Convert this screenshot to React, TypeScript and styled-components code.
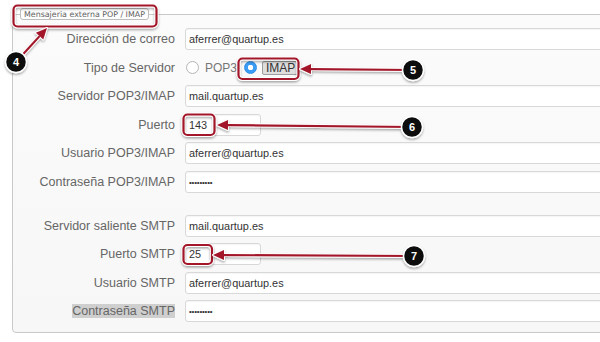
import React from "react";
import styled, { createGlobalStyle } from "styled-components";

const GlobalStyle = createGlobalStyle`
  html, body {
    margin: 0;
    padding: 0;
    background: #ffffff;
    overflow: hidden;
  }
  body {
    font-family: "Liberation Sans", Arial, sans-serif;
    width: 600px;
    height: 342px;
  }
`;

const Page = styled.div`
  position: relative;
  width: 600px;
  height: 342px;
  padding: 8px 0 0 12px;
  box-sizing: border-box;
  overflow: hidden;
`;

const Fieldset = styled.fieldset`
  margin: 0;
  width: 640px;
  box-sizing: border-box;
  padding: 8px 0 10px 0;
  border: 1px solid #c9c9c9;
  border-radius: 4px;
  background: linear-gradient(#fbfbfb, #f7f7f7);
`;

const Legend = styled.legend`
  margin-left: 7px;
  padding: 0 3px;
  height: 12px;
  line-height: 11px;
  box-sizing: border-box;
  font-family: "DejaVu Sans", Verdana, sans-serif;
  font-size: 7.9px;
  color: #5e5e5e;
  background: #fdfdfd;
  border: 1px solid #bdbdbd;
  border-radius: 3px;
  white-space: nowrap;
`;

const Grid = styled.div`
  display: grid;
  grid-template-columns: 162px 1fr;
  column-gap: 10px;
  row-gap: 6.5px;
  grid-auto-rows: auto;
`;

const Spacer = styled.div`
  grid-column: 1 / 3;
  height: 9px;
`;

const Label = styled.div`
  text-align: right;
  font-size: 12.5px;
  line-height: 22px;
  height: 22px;
  color: #666;
  white-space: nowrap;
`;

const Selected = styled.span`
  background: #cfcfcf;
  color: #666;
`;

const Field = styled.div<{ $short?: boolean }>`
  width: ${(p) => (p.$short ? "76px" : "450px")};
  height: 22px;
  box-sizing: border-box;
  border: 1px solid #d8d8d8;
  border-radius: 3px;
  background: #fff;
  box-shadow: inset 0 1px 1px rgba(0, 0, 0, 0.04);
  padding-left: 3px;
  font-size: 10.9px;
  line-height: 20px;
  color: #333;
  white-space: nowrap;
`;

const Dots = styled.span`
  font-size: 8px;
  letter-spacing: -0.2px;
  vertical-align: 1px;
`;

const RadioRow = styled.div`
  display: flex;
  align-items: center;
  height: 22px;
  padding-left: 1px;
  font-size: 12px;
  color: #777;
`;

const Radio = styled.span<{ $on?: boolean }>`
  width: 13px;
  height: 13px;
  box-sizing: border-box;
  border-radius: 50%;
  border: 1px solid ${(p) => (p.$on ? "#2f8ee6" : "#b5b5b5")};
  background: ${(p) => (p.$on ? "radial-gradient(circle, #fff 0 2.5px, #3b9cf5 3px)" : "#fff")};
  margin-right: ${(p) => (p.$on ? "5px" : "6px")};
  flex-shrink: 0;
`;

const RadioText = styled.span<{ $boxed?: boolean }>`
  margin-right: ${(p) => (p.$boxed ? "0" : "7px")};
  ${(p) =>
    p.$boxed
      ? `
    color: #333;
    background: #dedede;
    border: 1px solid #9d9d9d;
    border-radius: 2px;
    padding: 0 3px;
    line-height: 12px;
  `
      : ""}
`;

const Overlay = styled.svg`
  position: absolute;
  left: 0;
  top: 0;
  pointer-events: none;
`;

type Ann = { n: string; bx: number; by: number; tx: number; ty: number };

const RED = "#a3182b";

function Arrow({ n, bx, by, tx, ty }: Ann) {
  const ang = Math.atan2(ty - by, tx - bx);
  const len = 11;
  const half = 5;
  const baseX = tx - Math.cos(ang) * len;
  const baseY = ty - Math.sin(ang) * len;
  const px = -Math.sin(ang) * half;
  const py = Math.cos(ang) * half;
  const head = `${tx},${ty} ${baseX + px},${baseY + py} ${baseX - px},${baseY - py}`;
  return (
    <g>
      <g filter="url(#sh)">
        <line x1={bx} y1={by} x2={baseX} y2={baseY} stroke="#fff" strokeWidth={4} />
        <polygon points={head} fill="#fff" stroke="#fff" strokeWidth={2} strokeLinejoin="round" />
        <line x1={bx} y1={by} x2={baseX} y2={baseY} stroke={RED} strokeWidth={2.2} />
        <polygon points={head} fill={RED} />
        <circle cx={bx} cy={by} r={10.5} fill="#111" stroke="#fff" strokeWidth={1.5} />
      </g>
      <text
        x={bx}
        y={by + 4}
        textAnchor="middle"
        fontFamily="'Liberation Sans', Arial, sans-serif"
        fontWeight="bold"
        fontSize="11"
        fill="#fff"
      >
        {n}
      </text>
    </g>
  );
}

function Box({ x, y, w, h }: { x: number; y: number; w: number; h: number }) {
  return (
    <g filter="url(#sh)">
      <rect x={x} y={y} width={w} height={h} rx={4} fill="none" stroke="#fff" strokeWidth={4} />
      <rect x={x} y={y} width={w} height={h} rx={4} fill="none" stroke={RED} strokeWidth={2.2} />
    </g>
  );
}

const boxes = [
  { x: 13.5, y: 5.5, w: 143, h: 21 },
  { x: 238.5, y: 58.5, w: 60, h: 20.5 },
  { x: 183.5, y: 114.5, w: 31, h: 20.5 },
  { x: 183.5, y: 245, w: 28.5, h: 19 },
];

const arrows: Ann[] = [
  { n: "4", bx: 16, by: 62, tx: 47, ty: 28 },
  { n: "5", bx: 413, by: 70, tx: 300, ty: 69 },
  { n: "6", bx: 412, by: 127, tx: 217, ty: 125 },
  { n: "7", bx: 414, by: 256, tx: 213, ty: 255 },
];

const DOTS = "•••••••••";

export default function App() {
  return (
    <Page>
      <GlobalStyle />
      <Fieldset>
        <Legend>Mensajeria externa POP / IMAP</Legend>
        <Grid>
          <Label>Dirección de correo</Label>
          <Field>aferrer@quartup.es</Field>

          <Label>Tipo de Servidor</Label>
          <RadioRow>
            <Radio />
            <RadioText>POP3</RadioText>
            <Radio $on />
            <RadioText $boxed>IMAP</RadioText>
          </RadioRow>

          <Label>Servidor POP3/IMAP</Label>
          <Field>mail.quartup.es</Field>

          <Label>Puerto</Label>
          <Field $short>143</Field>

          <Label>Usuario POP3/IMAP</Label>
          <Field>aferrer@quartup.es</Field>

          <Label>Contraseña POP3/IMAP</Label>
          <Field>
            <Dots>{DOTS}</Dots>
          </Field>

          <Spacer />

          <Label>Servidor saliente SMTP</Label>
          <Field>mail.quartup.es</Field>

          <Label>Puerto SMTP</Label>
          <Field $short>25</Field>

          <Label>Usuario SMTP</Label>
          <Field>aferrer@quartup.es</Field>

          <Label>
            <Selected>Contraseña SMTP</Selected>
          </Label>
          <Field>
            <Dots>{DOTS}</Dots>
          </Field>
        </Grid>
      </Fieldset>

      <Overlay width={600} height={342} viewBox="0 0 600 342">
        <defs>
          <filter id="sh" x="-20%" y="-20%" width="140%" height="160%">
            <feDropShadow dx="0" dy="1.5" stdDeviation="1.2" floodColor="#000" floodOpacity="0.35" />
          </filter>
        </defs>
        {boxes.map((b, i) => (
          <Box key={i} {...b} />
        ))}
        {arrows.map((a) => (
          <Arrow key={a.n} {...a} />
        ))}
      </Overlay>
    </Page>
  );
}
